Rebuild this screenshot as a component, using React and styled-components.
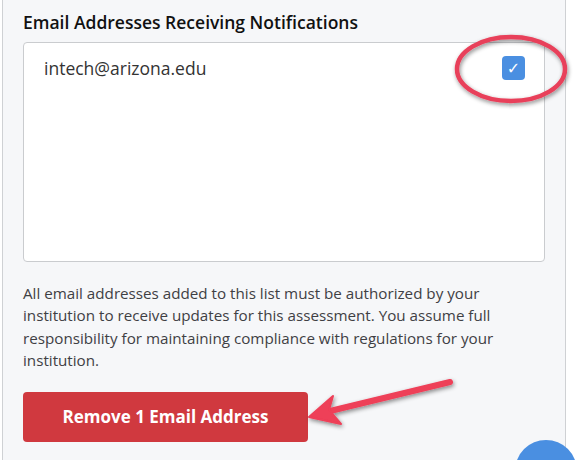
import React from "react";
import styled, { createGlobalStyle } from "styled-components";

const GlobalStyle = createGlobalStyle`
	html, body {
		margin: 0;
		padding: 0;
		background: #ffffff;
		font-family: "Open Sans", "Liberation Sans", sans-serif;
		overflow: hidden;
	}
`;

const Page = styled.div`
	position: relative;
	width: 576px;
	height: 460px;
	overflow: hidden;
`;

const Panel = styled.section`
	box-sizing: border-box;
	margin-left: 2px;
	width: 564px;
	height: 460px;
	padding: 11px 20px 0 20px;
	background: #f6f7f9;
	border-left: 1px solid #cfd1d4;
	border-right: 1px solid #cfd1d4;
`;

const Title = styled.h3`
	margin: 0 0 9px 0;
	font-size: 17.5px;
	line-height: 22px;
	font-weight: 600;
	color: #111;
`;

const ListBox = styled.div`
	box-sizing: border-box;
	height: 220px;
	background: #fff;
	border: 1px solid #cacccf;
	border-radius: 4px;
	padding: 12px 19px 0 20px;
`;

const EmailRow = styled.div`
	display: flex;
	align-items: center;
	justify-content: space-between;
`;

const EmailText = styled.span`
	font-size: 17.5px;
	line-height: 26px;
	color: #333;
`;

const Check = styled.span`
	display: flex;
	align-items: center;
	justify-content: center;
	width: 23px;
	height: 24px;
	border-radius: 4px;
	background: #4a8fe1;
	color: #fff;
	font-size: 16px;
	font-family: "DejaVu Sans", sans-serif;
`;

const Note = styled.p`
	margin: 20px 0 20px 0;
	font-size: 15.2px;
	line-height: 22.4px;
	color: #3f4044;
	max-width: 520px;
`;

const DangerButton = styled.button`
	display: block;
	width: 285px;
	height: 50px;
	border: none;
	border-radius: 4px;
	background: #d0393f;
	color: #fff;
	font-family: "Open Sans", "Liberation Sans", sans-serif;
	font-size: 17px;
	font-weight: 700;
	cursor: pointer;
`;

const Fab = styled.div`
	position: absolute;
	left: 515px;
	top: 440px;
	width: 62px;
	height: 62px;
	border-radius: 50%;
	background: #4a8fe1;
`;

const Overlay = styled.svg`
	position: absolute;
	left: 0;
	top: 0;
	pointer-events: none;
`;

const App = () => {
	//============
	return (
		<>
			<GlobalStyle />
			<Page>
				<Panel>
					<Title>Email Addresses Receiving Notifications</Title>
					<ListBox>
						<EmailRow>
							<EmailText>intech@arizona.edu</EmailText>
							<Check>✓</Check>
						</EmailRow>
					</ListBox>
					<Note>
						All email addresses added to this list must be authorized by your
						institution to receive updates for this assessment. You assume full
						responsibility for maintaining compliance with regulations for your
						institution.
					</Note>
					<DangerButton>Remove 1 Email Address</DangerButton>
				</Panel>
				<Fab />
				{/* annotation marks drawn over the screenshot */}
				<Overlay width="576" height="460" viewBox="0 0 576 460">
					<defs>
						<filter id="sh" x="-20%" y="-20%" width="140%" height="140%">
							<feDropShadow dx="1" dy="2" stdDeviation="2" floodColor="#000" floodOpacity="0.45" />
						</filter>
					</defs>
					<ellipse
						cx="511"
						cy="69"
						rx="54"
						ry="32"
						fill="none"
						stroke="#e8405a"
						strokeWidth="4.5"
						filter="url(#sh)"
					/>
					<g filter="url(#sh)" fill="#ee3f58" stroke="#ee3f58">
						<line x1="450" y1="382" x2="326" y2="412" strokeWidth="6" strokeLinecap="round" />
						<polygon points="309,417 333,396 329,410 341,424" strokeWidth="2" strokeLinejoin="round" />
					</g>
				</Overlay>
			</Page>
		</>
	);
};

export default App;
